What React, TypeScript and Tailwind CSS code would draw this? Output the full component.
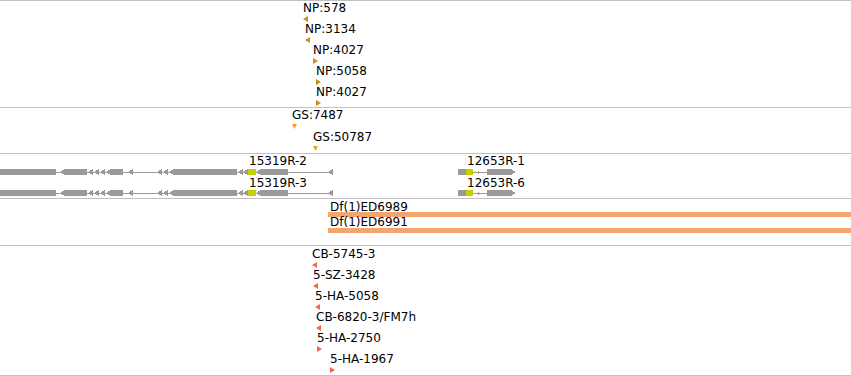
import React from 'react';

type Dir = 'l' | 'r' | 'd';
type Feat = { label: string; ml: string; dir: Dir; color: string };

const NP = '#c98f1c';
const GS = '#e9a224';
const ALLELE = '#f3684a';
const GRAY = '#9a9a9a';
const LIME = '#c3d100';

const font = "whitespace-nowrap font-['DejaVu_Sans',sans-serif] text-[12px] leading-[14px] text-black";

const npFeats: Feat[] = [
  { label: 'NP:578', ml: 'ml-[303px]', dir: 'l', color: NP },
  { label: 'NP:3134', ml: 'ml-[305px]', dir: 'l', color: NP },
  { label: 'NP:4027', ml: 'ml-[313px]', dir: 'r', color: NP },
  { label: 'NP:5058', ml: 'ml-[316px]', dir: 'r', color: NP },
  { label: 'NP:4027', ml: 'ml-[316px]', dir: 'r', color: NP },
];

const gsFeats: Feat[] = [
  { label: 'GS:7487', ml: 'ml-[292px]', dir: 'd', color: GS },
  { label: 'GS:50787', ml: 'ml-[313px]', dir: 'd', color: GS },
];

const alleleFeats: Feat[] = [
  { label: 'CB-5745-3', ml: 'ml-[312px]', dir: 'l', color: ALLELE },
  { label: '5-SZ-3428', ml: 'ml-[313px]', dir: 'l', color: ALLELE },
  { label: '5-HA-5058', ml: 'ml-[315px]', dir: 'l', color: ALLELE },
  { label: 'CB-6820-3/FM7h', ml: 'ml-[316px]', dir: 'l', color: ALLELE },
  { label: '5-HA-2750', ml: 'ml-[317px]', dir: 'r', color: ALLELE },
  { label: '5-HA-1967', ml: 'ml-[330px]', dir: 'r', color: ALLELE },
];

const Tri: React.FC<{ dir: Dir; color: string }> = ({ dir, color }) => {
  const pts = dir === 'l' ? '0,3 5,0 5,6' : dir === 'r' ? '0,0 5,3 0,6' : '0,0 5,0 2.5,5';
  return (
    <svg width="5" height={dir === 'd' ? 5 : 6} className="block">
      <polygon points={pts} fill={color} />
    </svg>
  );
};

// one stacked feature: label with its strand glyph under it
const Feature: React.FC<{ f: Feat; rowH: string; gap: string }> = ({ f, rowH, gap }) => (
  <div className={`${rowH} ${f.ml} flex flex-col items-start`}>
    <div className={font}>{f.label}</div>
    <div className={gap}>
      <Tri dir={f.dir} color={f.color} />
    </div>
  </div>
);

// gene model, minus strand
const LeftGene: React.FC = () => {
  const y = 0;
  const c = 3;
  const b = 6;
  const tri = (x: number) => `${x},${c} ${x + 5},${y} ${x + 5},${b}`;
  const arrowExon = (tip: number, end: number) =>
    `${tip},${c} ${tip + 5},${y} ${end},${y} ${end},${b} ${tip + 5},${b}`;
  return (
    <g fill={GRAY}>
      <line x1="0" x2="333" y1={c + 0.5} y2={c + 0.5} stroke={GRAY} strokeWidth="1" />
      <rect x="0" y={y} width="56" height="6" />
      <polygon points={arrowExon(60, 87)} />
      <polygon points={tri(88)} />
      <polygon points={tri(94)} />
      <polygon points={tri(100)} />
      <polygon points={arrowExon(106, 123)} />
      <polygon points={tri(128)} />
      <polygon points={tri(157)} />
      <polygon points={tri(163)} />
      <polygon points={arrowExon(169, 237)} />
      <polygon points={tri(238)} />
      <polygon points={tri(243)} />
      <rect x="248" y={y} width="8" height="6" fill={LIME} />
      <polygon points={arrowExon(256, 288)} />
      <polygon points={tri(328)} />
    </g>
  );
};

const RightGene: React.FC = () => (
  <g fill={GRAY}>
    <line x1="473" x2="487" y1="3.5" y2="3.5" stroke={GRAY} strokeWidth="1" />
    <polygon points="478,2 481,3.5 478,5" />
    <rect x="458" y="0" width="8" height="6" />
    <rect x="466" y="0" width="7" height="6" fill={LIME} />
    <polygon points="487,0 511,0 516,3 511,6 487,6" />
  </g>
);

const GeneRow: React.FC<{ left: string; right: string; rowClass: string; svgClass: string }> = ({
  left,
  right,
  rowClass,
  svgClass,
}) => (
  <div className={`flex flex-col ${rowClass}`}>
    <div className="flex">
      <span className={`${font} ml-[249px] w-[218px]`}>{left}</span>
      <span className={font}>{right}</span>
    </div>
    <svg width="851" height="6" className={`block ${svgClass}`} shapeRendering="crispEdges">
      <LeftGene />
      <RightGene />
    </svg>
  </div>
);

export default function App() {
  return (
    <div className="w-[851px] h-[376px] bg-white overflow-hidden flex flex-col">
      {/* NP insertions */}
      <div className="h-[107px] border-t border-[#c0c0c0] shrink-0 flex flex-col">
        {npFeats.map((f, i) => (
          <Feature key={i} f={f} rowH="h-[21px]" gap="mt-[1px]" />
        ))}
      </div>

      {/* GS insertions */}
      <div className="h-[46px] border-t border-[#c0c0c0] shrink-0 flex flex-col">
        {gsFeats.map((f, i) => (
          <Feature key={i} f={f} rowH="h-[22px]" gap="mt-[2px]" />
        ))}
      </div>

      {/* gene models */}
      <div className="h-[45px] border-t border-[#c0c0c0] shrink-0 flex flex-col">
        <GeneRow left="15319R-2" right="12653R-1" rowClass="" svgClass="mt-[1px]" />
        <GeneRow left="15319R-3" right="12653R-6" rowClass="mt-[1px]" svgClass="" />
      </div>

      {/* deficiencies */}
      <div className="h-[47px] border-t border-[#c0c0c0] shrink-0 flex flex-col pt-[1px]">
        <div className={`${font} h-[12px] ml-[330px]`}>Df(1)ED6989</div>
        <div className="h-[5px] ml-[328px] bg-[#f4a46e]" />
        <div className={`${font} h-[11px] !leading-[10px] ml-[330px]`}>Df(1)ED6991</div>
        <div className="h-[5px] ml-[328px] bg-[#f4a46e]" />
      </div>

      {/* alleles */}
      <div className="h-[131px] border-t border-b border-[#c0c0c0] shrink-0 flex flex-col pt-[1px]">
        {alleleFeats.map((f, i) => (
          <Feature key={i} f={f} rowH="h-[21px]" gap="mt-[1px]" />
        ))}
      </div>
    </div>
  );
}
